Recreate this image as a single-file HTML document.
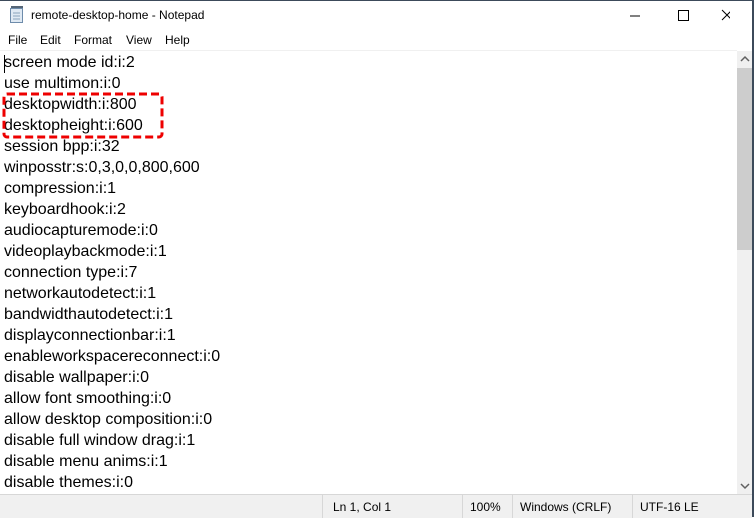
<!DOCTYPE html><html><head><style>
body{margin:0;width:754px;height:517px;overflow:hidden;background:#fff;font-family:"Liberation Sans",sans-serif;position:relative}
.top{position:absolute;left:0;top:0;width:754px;height:1px;background:#3c4a5a}
.rb{position:absolute;right:0;top:0;width:2px;height:517px;background:#3c4a5a}
.title{position:absolute;left:31px;top:8px;font-size:12px;color:#000}
.menu{position:absolute;top:33px;left:0;font-size:12px}
.menu span{position:absolute;top:0}
.area{position:absolute;left:0;top:50px;width:737px;height:443px;border-top:1px solid #f0f0f0}
.txt{position:absolute;left:4px;top:52px;font-size:16px;line-height:21px;color:#000;white-space:pre}
.sb{position:absolute;left:737px;top:51px;width:15px;height:443px;background:#f0f0f0}
.thumb{position:absolute;left:737px;top:68px;width:15px;height:182px;background:#cdcdcd}
.status{position:absolute;left:0;top:494px;width:752px;height:23px;background:#f0f0f0;border-top:1px solid #d7d7d7;font-size:12px}
.status span{position:absolute;top:5px}
.sep{position:absolute;top:0;width:1px;height:23px;background:#d7d7d7}
</style></head><body>
<div class="top"></div><div class="rb"></div>
<svg style="position:absolute;left:9px;top:6px" width="16" height="18"><rect x="1.5" y="2.5" width="12" height="14" fill="#dfe9f3" stroke="#6e8cab"/><path d="M4 7h7M4 10h7M4 13h7" stroke="#8aa2bb"/><path d="M2 1h12" stroke="#567" stroke-width="2"/></svg>
<div class="title">remote-desktop-home - Notepad</div>
<svg style="position:absolute;left:630px;top:8px" width="100" height="16"><path d="M0 8h10" stroke="#000"/><rect x="48.5" y="2.5" width="10" height="10" fill="none" stroke="#000"/><path d="M92 2l10 10M102 2l-10 10" stroke="#000"/></svg>
<div class="menu"><span style="left:8px">File</span><span style="left:40px">Edit</span><span style="left:74px">Format</span><span style="left:126px">View</span><span style="left:165px">Help</span></div>
<div class="area"></div>
<div style="position:absolute;left:4px;top:55px;width:1px;height:18px;background:#000"></div>
<div class="txt">screen mode id:i:2
use multimon:i:0
desktopwidth:i:800
desktopheight:i:600
session bpp:i:32
winposstr:s:0,3,0,0,800,600
compression:i:1
keyboardhook:i:2
audiocapturemode:i:0
videoplaybackmode:i:1
connection type:i:7
networkautodetect:i:1
bandwidthautodetect:i:1
displayconnectionbar:i:1
enableworkspacereconnect:i:0
disable wallpaper:i:0
allow font smoothing:i:0
allow desktop composition:i:0
disable full window drag:i:1
disable menu anims:i:1
disable themes:i:0</div>
<svg style="position:absolute;left:2px;top:92px" width="164" height="48"><rect x="2" y="2" width="158" height="43" rx="3" fill="none" stroke="#e00" stroke-width="3" stroke-dasharray="8 4"/></svg>
<div class="sb"></div><div class="thumb"></div>
<svg style="position:absolute;left:740px;top:55px" width="10" height="8"><path d="M1 6l4-4 4 4" fill="none" stroke="#606060" stroke-width="1.5"/></svg>
<svg style="position:absolute;left:740px;top:482px" width="10" height="8"><path d="M1 2l4 4 4-4" fill="none" stroke="#606060" stroke-width="1.5"/></svg>
<div class="status"><div class="sep" style="left:322px"></div><div class="sep" style="left:462px"></div><div class="sep" style="left:512px"></div><div class="sep" style="left:632px"></div>
<span style="left:333px">Ln 1, Col 1</span><span style="left:470px">100%</span><span style="left:520px">Windows (CRLF)</span><span style="left:640px">UTF-16 LE</span></div>
</body></html>
